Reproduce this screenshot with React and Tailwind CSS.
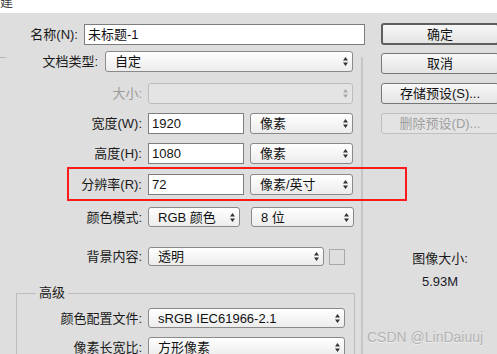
import React from "react";

const font = { fontFamily: '"Liberation Sans", "Noto Sans CJK SC", sans-serif' };

const Arrows = ({ disabled }) => (
  <svg width="5" height="9" viewBox="0 0 5 9" className="shrink-0">
    <path
      d="M0 3.5L2.5 0L5 3.5Z M0 5.5H5L2.5 9Z"
      fill={disabled ? "#a8a8a8" : "#333333"}
    />
  </svg>
);

const Select = ({ className, children, disabled }) => (
  <div
    className={`flex items-center justify-between rounded-[3px] border pl-[9px] pr-[4px] ${
      disabled
        ? "border-[#bcbcbc] bg-[#e4e4e4]"
        : "border-[#8a8a8a] bg-linear-to-b from-white to-[#ececec]"
    } ${className}`}
  >
    <span className="leading-none text-[#111]">{children}</span>
    <Arrows disabled={disabled} />
  </div>
);

const Input = ({ className, value }) => (
  <div
    className={`flex items-center border border-[#7d7d7d] bg-white pl-[3px] leading-none text-[#111] ${className}`}
  >
    {value}
  </div>
);

const Label = ({ className, children, muted }) => (
  <div
    className={`shrink-0 text-right leading-none ${
      muted ? "text-[#9b9b9b]" : "text-[#1a1a1a]"
    } ${className}`}
  >
    {children}
  </div>
);

const Button = ({ children, className, primary, disabled }) => (
  <div
    className={`flex items-center justify-center rounded-[3px] leading-none ${
      primary
        ? "border-2 border-[#5f5f5f] bg-linear-to-b from-[#f8f8f8] to-[#e4e4e4] text-[#111]"
        : disabled
        ? "border border-[#bfbfbf] bg-[#e3e3e3] text-[#a0a0a0]"
        : "border border-[#767676] bg-linear-to-b from-[#f8f8f8] to-[#e4e4e4] text-[#111]"
    } ${className}`}
  >
    {children}
  </div>
);

export default function App() {
  return (
    <div
      className="relative h-[354px] w-[497px] overflow-hidden bg-[#dedede] text-[13px]"
      style={font}
    >
      <div className="h-[13px] overflow-hidden bg-white">
        <div className="mt-[-6px] pl-[0px] text-[13px] leading-[16px] text-[#444]">
          建
        </div>
      </div>

      <div className="flex">
        <div className="relative w-[366px] shrink-0">
          <div className="absolute left-0 top-[44px] h-px w-[6px] bg-[#b9b9b9]" />
          <div className="absolute bottom-0 left-[361px] top-[44px] w-[2px] rounded-t-[1px] bg-[#c6c6c6]" />

          <div className="mt-[11px] flex h-[21px] items-center">
            <Label className="w-[78px]">名称(N):</Label>
            <Input className="ml-[6px] h-[21px] w-[281px]" value="未标题-1" />
          </div>

          <div className="mt-[6px] flex h-[21px] items-center">
            <Label className="w-[98px]">文档类型:</Label>
            <Select className="ml-[7px] h-[21px] w-[248px]">自定</Select>
          </div>

          <div className="mt-[11px] flex h-[21px] items-center">
            <Label className="w-[142px]" muted>
              大小:
            </Label>
            <Select className="ml-[6px] h-[21px] w-[205px]" disabled>
              {""}
            </Select>
          </div>

          <div className="mt-[9px] flex h-[21px] items-center">
            <Label className="w-[142px]">宽度(W):</Label>
            <Input className="ml-[6px] h-[21px] w-[96px]" value="1920" />
            <Select className="ml-[6px] h-[21px] w-[103px]">像素</Select>
          </div>

          <div className="mt-[9px] flex h-[21px] items-center">
            <Label className="w-[142px]">高度(H):</Label>
            <Input className="ml-[6px] h-[21px] w-[96px]" value="1080" />
            <Select className="ml-[6px] h-[21px] w-[103px]">像素</Select>
          </div>

          <div className="mt-[10px] flex h-[21px] items-center">
            <Label className="w-[142px]">分辨率(R):</Label>
            <Input className="ml-[6px] h-[21px] w-[96px]" value="72" />
            <Select className="ml-[6px] h-[21px] w-[103px]">像素/英寸</Select>
          </div>

          <div className="mt-[12px] flex h-[20px] items-center">
            <Label className="w-[142px]">颜色模式:</Label>
            <Select className="ml-[6px] h-[20px] w-[92px]">RGB 颜色</Select>
            <Select className="ml-[11px] h-[20px] w-[103px]">8 位</Select>
          </div>

          <div className="mt-[20px] flex h-[19px] items-center">
            <Label className="w-[142px]">背景内容:</Label>
            <Select className="ml-[6px] h-[19px] w-[176px]">透明</Select>
            <div className="ml-[5px] h-[16px] w-[16px] border border-[#a9a9a9]" />
          </div>

          <fieldset className="ml-[16px] mt-[19px] w-[339px] border border-b-0 border-[#bdbdbd] pb-[20px]">
            <legend className="ml-[19px] px-[3px] leading-[16px] text-[#1a1a1a]">
              高级
            </legend>
            <div className="mt-[7px] flex h-[20px] items-center">
              <Label className="w-[125px]">颜色配置文件:</Label>
              <Select className="ml-[6px] h-[20px] w-[197px]">
                sRGB IEC61966-2.1
              </Select>
            </div>
            <div className="mt-[9px] flex h-[20px] items-center">
              <Label className="w-[125px]">像素长宽比:</Label>
              <Select className="ml-[6px] h-[20px] w-[197px]">方形像素</Select>
            </div>
          </fieldset>
        </div>

        <div className="ml-[15px] flex w-[118px] shrink-0 flex-col">
          <Button primary className="mt-[10px] h-[22px]">
            确定
          </Button>
          <Button className="mt-[8px] h-[21px]">取消</Button>
          <Button className="mt-[9px] h-[21px]">存储预设(S)...</Button>
          <Button disabled className="mt-[9px] h-[21px]">
            删除预设(D)...
          </Button>
          <div className="mt-[117px] text-center leading-[16px] text-[#1a1a1a]">
            图像大小:
          </div>
          <div className="mt-[7px] text-center leading-[16px] text-[#1a1a2a]">
            5.93M
          </div>
        </div>
      </div>

      <div className="absolute left-[67px] top-[167px] h-[34px] w-[340px] border-2 border-[#ff1a1a]" />

      <div className="absolute left-[367px] top-[329px] text-[14px] leading-[16px] text-[#b3b3b3] [text-shadow:0_1px_0_rgba(255,255,255,0.5)]">
        CSDN @LinDaiuuj
      </div>
    </div>
  );
}
